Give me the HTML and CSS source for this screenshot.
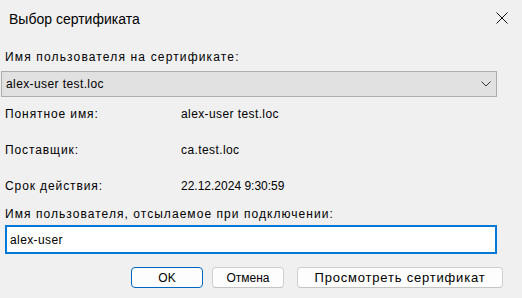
FILE: index.html
```html
<!DOCTYPE html>
<html lang="ru">
<head>
  <meta charset="UTF-8" />
  <title>Выбор сертификата</title>
  <link rel="stylesheet" href="styles.css">
</head>
<body>
  <div class="dialog">
    <div class="titlebar">
      <span class="title">Выбор сертификата</span>
      <svg class="close" width="12" height="12" viewBox="0 0 12 12">
        <path d="M0.5 0.5 L11.5 11.5 M11.5 0.5 L0.5 11.5" stroke="#111" stroke-width="1" fill="none"/>
      </svg>
    </div>

    <div class="content">
      <label class="field-label">Имя пользователя на сертификате:</label>
      <div class="combo">
        <span class="value">alex-user test.loc</span>
        <svg class="chevron" width="10" height="6" viewBox="0 0 10 6">
          <path d="M0.5 0.5 L5 5 L9.5 0.5" stroke="#333" stroke-width="1" fill="none"/>
        </svg>
      </div>

      <div class="details">
        <div class="row"><span class="key">Понятное имя:</span><span class="value">alex-user test.loc</span></div>
        <div class="row"><span class="key">Поставщик:</span><span class="value">ca.test.loc</span></div>
        <div class="row"><span class="key">Срок действия:</span><span>22.12.2024 9:30:59</span></div>
      </div>

      <label class="field-label second" for="sendName">Имя пользователя, отсылаемое при подключении:</label>
      <input type="text" id="sendName" class="textbox" value="alex-user">

      <div class="buttons">
        <button class="btn btn-default">OK</button>
        <button class="btn">Отмена</button>
        <button class="btn btn-wide">Просмотреть сертификат</button>
      </div>
    </div>
  </div>
</body>
</html>
```

FILE: styles.css
```css
body {
  margin: 0;
  padding: 0;
  background: #f0f0f0;
  font-family: 'Liberation Sans', Arial, sans-serif;
  font-size: 12px;
  color: #000;
}

.dialog {
  width: 522px;
  height: 298px;
}

.titlebar {
  display: flex;
  justify-content: space-between;
  align-items: center;
  height: 36px;
  padding: 0 14px 0 9px;
}

.title {
  font-size: 14px;
  margin-top: 1px;
}

.close {
  display: block;
}

.content {
  padding: 0 25px 0 5px;
}

.field-label {
  display: block;
  line-height: 15px;
  margin-top: 14px;
  letter-spacing: 1.15px;
}

.value {
  letter-spacing: 0.4px;
}

.combo {
  display: flex;
  justify-content: space-between;
  align-items: center;
  height: 24px;
  margin: 6px 0 0 -4px;
  padding: 0 5px 0 4px;
  background: #e1e1e1;
  border: 1px solid #adadad;
}

.chevron {
  display: block;
}

.details {
  padding-top: 9px;
}

.row {
  display: flex;
  height: 35px;
  line-height: 15px;
  padding-top: 1px;
}

.key {
  width: 176px;
  letter-spacing: 0.9px;
}

.field-label.second {
  margin-top: -7px;
  letter-spacing: 1.05px;
}

.textbox {
  display: block;
  box-sizing: border-box;
  width: 492px;
  height: 29px;
  margin-top: 3px;
  padding: 0 3px;
  border: 2px solid #0078d7;
  background: #fff;
  font-family: inherit;
  font-size: 12px;
  letter-spacing: 0.4px;
  outline: none;
}

.buttons {
  display: flex;
  margin-top: 13px;
  margin-left: 126px;
  gap: 9px;
}

.btn {
  flex-shrink: 0;
  height: 21px;
  width: 72px;
  padding: 0;
  background: #fdfdfd;
  border: 1px solid #d0d0d0;
  border-bottom-color: #c4c4c4;
  border-radius: 4px;
  font-family: inherit;
  font-size: 12px;
  color: #000;
}

.btn-default {
  border-color: #0067c0;
}

.btn-wide {
  width: 206px;
  margin-left: 4px;
  font-size: 13px;
  letter-spacing: 0.8px;
}
```
